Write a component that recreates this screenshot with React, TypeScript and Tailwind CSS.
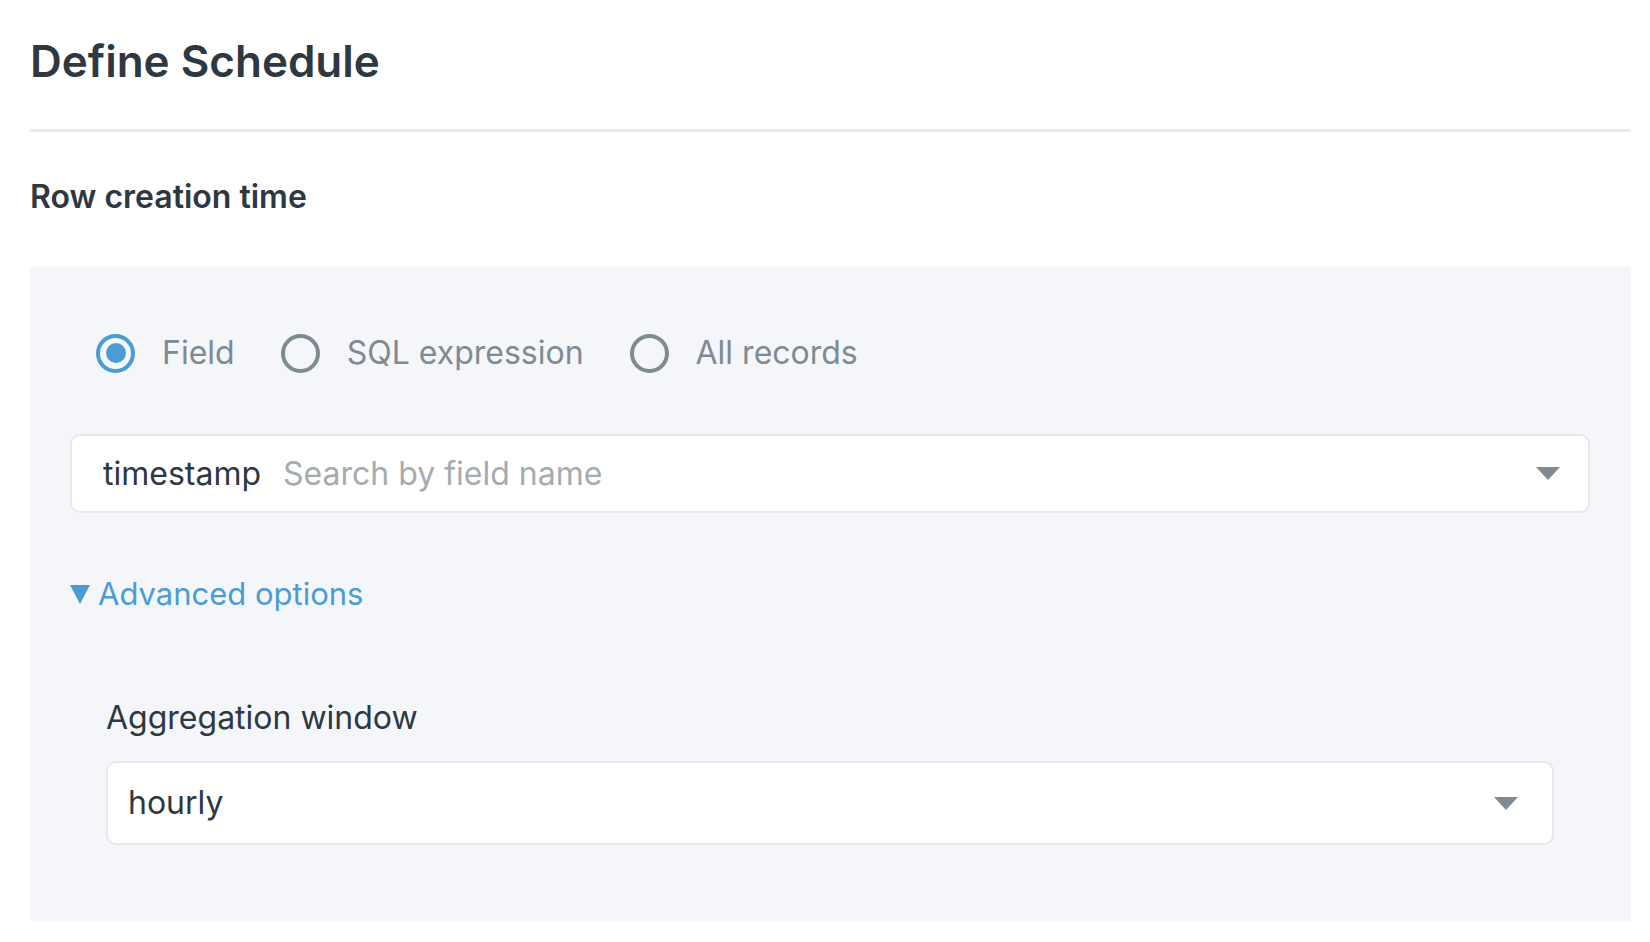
import React from 'react'

function Caret() {
  return (
    <svg width="24" height="13" viewBox="0 0 24 13" className="shrink-0">
      <path d="M0 0 H24 L12 13 Z" fill="#7f8a93" />
    </svg>
  )
}

function Radio({ label, checked }: { label: string; checked?: boolean }) {
  return (
    <label className="flex items-center gap-[27px]">
      {checked ? (
        <span className="flex h-[39px] w-[39px] items-center justify-center rounded-full border-[4px] border-[#4b9cd3]">
          <span className="h-[20px] w-[20px] rounded-full bg-[#4b9cd3]" />
        </span>
      ) : (
        <span className="h-[39px] w-[39px] rounded-full border-[4px] border-[#7f8a93]" />
      )}
      <span className="text-[32px] leading-[40px] text-[#7f8a93]">{label}</span>
    </label>
  )
}

export default function App() {
  return (
    <div className="min-h-screen bg-white pl-[30px] pr-[19px] font-['Inter',sans-serif]">
      <h1 className="pt-[35px] text-[44px] font-semibold leading-[53px] text-[#2e3841]">
        Define Schedule
      </h1>
      <div className="mt-[41px] h-[3px] bg-[#e8ebee]" />

      <h2 className="mt-[46px] text-[32px] font-semibold leading-[38px] text-[#2e3841]">
        Row creation time
      </h2>

      <div className="mt-[51px] h-[654px] bg-[#f5f6fa] pl-[40px] pr-[41px] pt-[66px]">
        <div className="ml-[26px] flex items-center gap-[46px]">
          <Radio label="Field" checked />
          <Radio label="SQL expression" />
          <Radio label="All records" />
        </div>

        <div className="mt-[61px] flex h-[79px] items-center rounded-[10px] border-2 border-[#e6e8eb] bg-white pl-[31px] pr-[28px]">
          <span className="text-[32px] text-[#2e3841]">timestamp</span>
          <span className="ml-[22px] flex-1 text-[32px] text-[#a6abb0]">Search by field name</span>
          <Caret />
        </div>

        <div className="mt-[61px] flex items-center gap-[8px] text-[#4b9cd3]">
          <svg width="20" height="19" viewBox="0 0 20 19">
            <path d="M0 0 H20 L10 19 Z" fill="#4b9cd3" />
          </svg>
          <span className="text-[31px] leading-[40px]">Advanced options</span>
        </div>

        <div className="px-[36px] pt-[84px]">
          <div className="text-[32px] leading-[40px] text-[#2e3841]">Aggregation window</div>
          <div className="mt-[23px] flex h-[84px] items-center rounded-[10px] border-2 border-[#e6e8eb] bg-white pl-[20px] pr-[34px]">
            <span className="flex-1 text-[32px] text-[#2e3841]">hourly</span>
            <Caret />
          </div>
        </div>
      </div>
    </div>
  )
}
